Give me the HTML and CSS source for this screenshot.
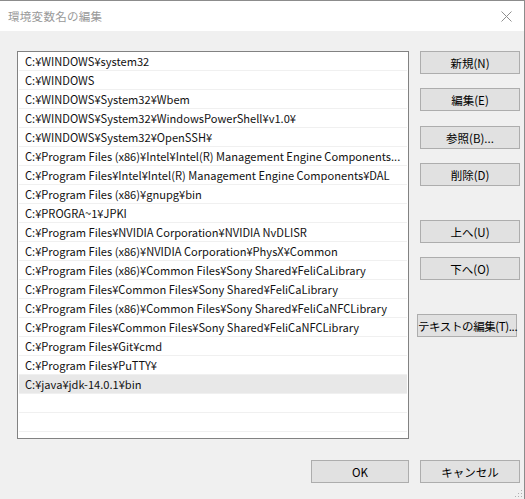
FILE: index.html
```html
<!DOCTYPE html>
<html>
<head>
<meta charset="UTF-8">
<title>環境変数名の編集</title>
<link rel="stylesheet" href="styles.css">
</head>
<body>
	<div class="window">
		<div class="titlebar">
			<span class="title">環境変数名の編集</span>
			<svg class="close" width="11" height="11" viewBox="0 0 11 11">
				<path d="M0.5 0.5 L10.5 10.5 M10.5 0.5 L0.5 10.5" stroke="#8f8f8f" stroke-width="1" fill="none"/>
			</svg>
		</div>
		<div class="main">
			<ul class="list">
				<li>C:¥WINDOWS¥system32</li>
				<li>C:¥WINDOWS</li>
				<li>C:¥WINDOWS¥System32¥Wbem</li>
				<li>C:¥WINDOWS¥System32¥WindowsPowerShell¥v1.0¥</li>
				<li>C:¥WINDOWS¥System32¥OpenSSH¥</li>
				<li>C:¥Program Files (x86)¥Intel¥Intel(R) Management Engine Components...</li>
				<li>C:¥Program Files¥Intel¥Intel(R) Management Engine Components¥DAL</li>
				<li>C:¥Program Files (x86)¥gnupg¥bin</li>
				<li>C:¥PROGRA~1¥JPKI</li>
				<li>C:¥Program Files¥NVIDIA Corporation¥NVIDIA NvDLISR</li>
				<li>C:¥Program Files (x86)¥NVIDIA Corporation¥PhysX¥Common</li>
				<li>C:¥Program Files (x86)¥Common Files¥Sony Shared¥FeliCaLibrary</li>
				<li>C:¥Program Files¥Common Files¥Sony Shared¥FeliCaLibrary</li>
				<li>C:¥Program Files (x86)¥Common Files¥Sony Shared¥FeliCaNFCLibrary</li>
				<li>C:¥Program Files¥Common Files¥Sony Shared¥FeliCaNFCLibrary</li>
				<li>C:¥Program Files¥Git¥cmd</li>
				<li>C:¥Program Files¥PuTTY¥</li>
				<li class="selected">C:¥java¥jdk-14.0.1¥bin</li>
				<li></li>
				<li></li>
			</ul>
			<div class="side">
				<button class="btn">新規(N)</button>
				<button class="btn gap1">編集(E)</button>
				<button class="btn gap2">参照(B)...</button>
				<button class="btn gap1">削除(D)</button>
				<button class="btn gap3">上へ(U)</button>
				<button class="btn gap1">下へ(O)</button>
				<button class="btn gap3 shift">テキストの編集(T)...</button>
			</div>
		</div>
		<div class="footer">
			<button class="btn ok">OK</button>
			<button class="btn">キャンセル</button>
		</div>
		<svg class="grip" width="9" height="9" viewBox="0 0 9 9">
			<rect x="7" y="1" width="1" height="1" fill="#b0b0b0"/>
			<rect x="4" y="4" width="1" height="1" fill="#b0b0b0"/>
			<rect x="7" y="4" width="1" height="1" fill="#b0b0b0"/>
			<rect x="1" y="7" width="1" height="1" fill="#b0b0b0"/>
			<rect x="4" y="7" width="1" height="1" fill="#b0b0b0"/>
			<rect x="7" y="7" width="1" height="1" fill="#b0b0b0"/>
		</svg>
	</div>
</body>
</html>
```
FILE: styles.css
```css
body {
	margin: 0;
	font-family: "Noto Sans CJK JP", "Noto Sans", sans-serif;
	font-size: 12px;
	color: #000;
}

.window {
	position: relative;
	width: 525px;
	height: 499px;
	box-sizing: border-box;
	border-top: 1px solid #8c8c8c;
	border-right: 1px solid #8c8c8c;
	background: #f0f0f0;
	display: flex;
	flex-direction: column;
}

.titlebar {
	height: 30px;
	background: #fff;
	display: flex;
	align-items: center;
	justify-content: space-between;
	padding: 0 12px 0 8px;
}

.title {
	color: #999;
	font-size: 11.5px;
	letter-spacing: 0.3px;
}

.close {
	display: block;
	margin-top: 1px;
}

.main {
	display: flex;
	padding: 20px 0 0 17px;
}

.list {
	list-style: none;
	margin: 0;
	padding: 0;
	width: 392px;
	height: 388px;
	box-sizing: border-box;
	border: 1px solid #828282;
	background: #fff;
	overflow: hidden;
}

.list li {
	height: 19px;
	box-sizing: border-box;
	line-height: 18px;
	padding-left: 6px;
	margin: 0 1px;
	border-bottom: 1px solid #f0f0f0;
	font-size: 11.1px;
	color: #111;
	white-space: nowrap;
	overflow: hidden;
	text-overflow: ellipsis;
}

.list li.selected {
	background: #e8e8e8;
}

.side {
	display: flex;
	flex-direction: column;
	align-items: flex-start;
	margin-left: 11px;
}

.btn {
	width: 100px;
	height: 23px;
	padding: 0;
	margin: 0;
	background: #e1e1e1;
	border: 1px solid #adadad;
	font-family: "Noto Sans CJK JP", "Noto Sans", sans-serif;
	font-size: 11.5px;
	color: #000;
	line-height: 20px;
	white-space: nowrap;
}

.gap1 {
	margin-top: 14px;
}

.gap2 {
	margin-top: 15px;
}

.gap3 {
	margin-top: 34px;
}

.shift {
	margin-left: -3px;
	letter-spacing: -0.4px;
}

.footer {
	display: flex;
	justify-content: flex-end;
	gap: 11px;
	margin-top: 21px;
	padding-right: 4px;
}

.ok {
	width: 98px;
}

.grip {
	position: absolute;
	right: 1px;
	bottom: 1px;
}
```
